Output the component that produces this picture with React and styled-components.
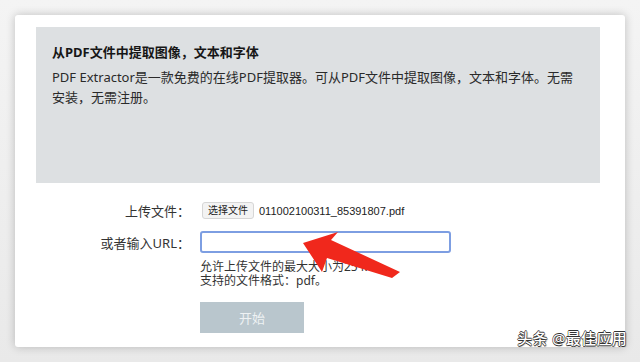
import React from "react";
import styled, { createGlobalStyle } from "styled-components";

const GlobalStyle = createGlobalStyle`
  html, body {
    margin: 0;
    padding: 0;
    background: #eeeeee;
    font-family: "Noto Sans", "Noto Sans CJK SC", sans-serif;
    color: #222;
  }
`;

const Page = styled.div`
  position: relative;
  width: 640px;
  height: 362px;
  overflow: hidden;
  padding: 15px 15px 0 15px;
  box-sizing: border-box;
  background: linear-gradient(#f4f4f4, #e9e9e9);
`;

const Card = styled.div`
  width: 610px;
  height: 332px;
  box-sizing: border-box;
  padding: 12px 25px 0 21px;
  background: #fff;
  border-radius: 3px;
  box-shadow: 0 0 10px rgba(0, 0, 0, 0.22);
`;

const InfoPanel = styled.div`
  height: 156px;
  box-sizing: border-box;
  padding: 15px 16px;
  background: #dde0e2;
`;

const Title = styled.div`
  font-size: 13px;
  font-weight: 700;
  line-height: 20px;
  color: #161616;
  margin-bottom: 5px;
`;

const Desc = styled.p`
  margin: 0;
  font-size: 13px;
  line-height: 20px;
  color: #2a2a2a;
`;

const Form = styled.div`
  display: grid;
  grid-template-columns: 154px 1fr;
  column-gap: 10px;
  margin-top: 18px;
  align-items: center;
`;

const Label = styled.div`
  text-align: right;
  font-size: 13px;
  color: #333;
  margin-top: ${(p) => p.$top || 0}px;
`;

const Field = styled.div`
  grid-column: 2;
  display: flex;
  align-items: center;
  gap: 5px;
  margin-top: ${(p) => p.$top || 0}px;
`;

const FileButton = styled.span`
  display: inline-block;
  font-size: 10px;
  line-height: 15px;
  padding: 0 5px;
  border: 1px solid #d6d6d6;
  border-radius: 3px;
  background: #f3f3f3;
  color: #222;
  margin-left: 2px;
`;

const FileName = styled.span`
  font-size: 11px;
  color: #222;
  font-family: "Liberation Sans", "Noto Sans CJK SC", sans-serif;
`;

const UrlInput = styled.div`
  width: 251px;
  height: 22px;
  box-sizing: border-box;
  border: 2px solid #7d9ee2;
  border-radius: 3px;
  background: #fff;
`;

const Help = styled.div`
  grid-column: 2;
  margin-top: 7px;
  font-size: 12px;
  line-height: 14px;
  color: #333;
`;

const StartButton = styled.div`
  grid-column: 2;
  margin-top: 14px;
  width: 104px;
  height: 31px;
  display: flex;
  align-items: center;
  justify-content: center;
  background: #b9c6cd;
  color: #eef2f4;
  font-size: 13px;
`;

const Arrow = styled.svg`
  position: absolute;
  left: 295px;
  top: 225px;
`;

const Watermark = styled.div`
  position: absolute;
  right: 13px;
  bottom: 14px;
  font-size: 15px;
  font-weight: 500;
  color: #fff;
  letter-spacing: 0.3px;
  text-shadow: 0.6px 0 0 #333, -0.6px 0 0 #333, 0 0.6px 0 #333,
    0 -0.6px 0 #333, 1px 1px 1px rgba(0, 0, 0, 0.4);
`;

export default function App() {
  return (
    <>
      <GlobalStyle />
      <Page>
        <Card>
          <InfoPanel>
            <Title>从PDF文件中提取图像，文本和字体</Title>
            <Desc>
              PDF Extractor是一款免费的在线PDF提取器。可从PDF文件中提取图像，文本和字体。无需安装，无需注册。
            </Desc>
          </InfoPanel>
          <Form>
            <Label>上传文件：</Label>
            <Field>
              <FileButton>选择文件</FileButton>
              <FileName>011002100311_85391807.pdf</FileName>
            </Field>
            <Label $top={11}>或者输入URL：</Label>
            <Field $top={11}>
              <UrlInput />
            </Field>
            <Help>
              允许上传文件的最大大小为25 MB
              <br />
              支持的文件格式：pdf。
            </Help>
            <StartButton>开始</StartButton>
          </Form>
        </Card>
        <Arrow width="110" height="60" viewBox="0 0 110 60">
          <polygon
            points="8,18 43,7 36,15 105,47 97,53 32,33 27,47"
            fill="#f0281c"
          />
        </Arrow>
        <Watermark>头条 @最佳应用</Watermark>
      </Page>
    </>
  );
}
